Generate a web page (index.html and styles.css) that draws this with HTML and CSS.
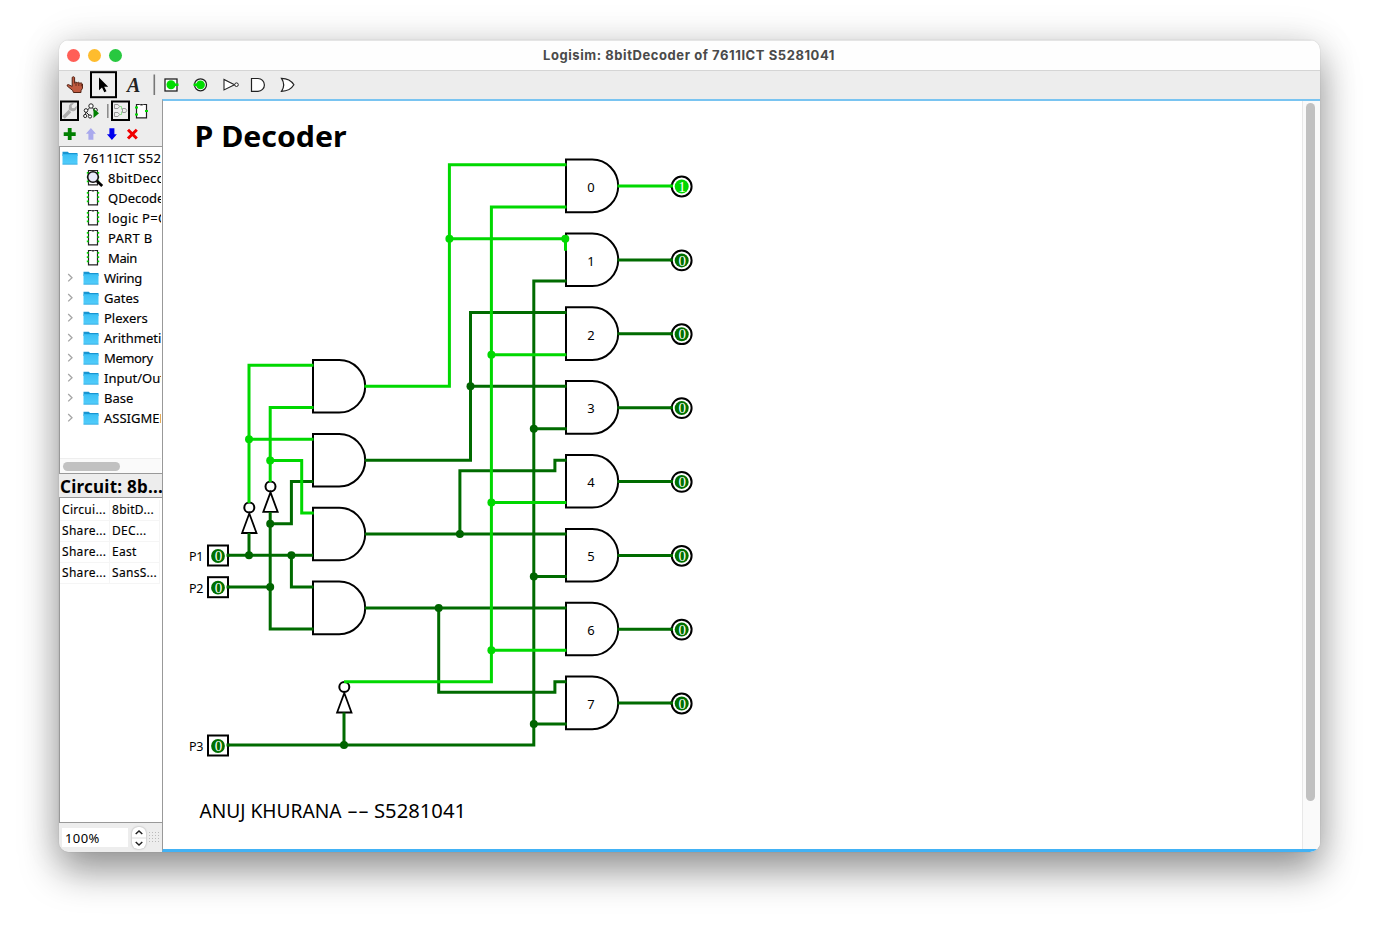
FILE: index.html
```html
<!DOCTYPE html>
<html lang="en">
<head>
<meta charset="utf-8">
<title>Logisim: 8bitDecoder of 7611ICT S5281041</title>
<link rel="stylesheet" href="styles.css">
</head>
<body>
<svg class="defs" width="0" height="0">
  <defs>
    <linearGradient id="blue" x1="0" y1="0" x2="0" y2="1"><stop offset="0" stop-color="#3bc0f5"/><stop offset="1" stop-color="#52cdfb"/></linearGradient>
    <symbol id="folder" viewBox="0 0 16 14"><path d="M.5 .7h5.300l1.200 1.300h8.500V5H.5z" fill="#1795d2"/><path d="M.5 3.200h15V13.300H.5z" fill="url(#blue)"/><path d="M.5 13.200h15" stroke="#2da5dc" stroke-width=".8"/></symbol>
    <symbol id="chip" viewBox="0 0 16 18"><path d="M3.500 1.500h9v14.400h-9z" fill="#fff" stroke="#222" stroke-width="1.200"/><path d="M6.200 1.500q1.800 2 3.600 0" fill="none" stroke="#777"/><path d="M2.700 3v12.500M13.300 3v12.500" stroke="#00dc00" stroke-width="1.800" stroke-dasharray="1.700 2.600"/></symbol>
    <symbol id="lens" viewBox="0 0 20 20"><path d="M4.500 2.500h9v14.400h-9z" fill="#fff" stroke="#222" stroke-width="1.200"/><path d="M3.700 4v12.500M14.300 4v12.500" stroke="#00dc00" stroke-width="1.800" stroke-dasharray="1.700 2.600"/><circle cx="9" cy="9" r="5.300" fill="#e9e9fa" stroke="#111" stroke-width="1.600"/><path d="m12.900 13 5.300 5" stroke="#000" stroke-width="2.800"/></symbol>
    <symbol id="chev" viewBox="0 0 8 10"><path d="m2.200 1 3.800 3.700-3.800 3.700" fill="none" stroke="#a5a5a5" stroke-width="1.300"/></symbol>
    <g id="gate"><path d="M0-26.300H26.200A26 26.300 0 0 1 26.200 26.300H0z" fill="#fff" stroke="#000" stroke-width="2"/></g>
    <g id="not"><circle cx="0" cy="0" r="5" fill="#fff" stroke="#000" stroke-width="2"/><path d="M0 6-7.200 25.500H7.200z" fill="#fff" stroke="#000" stroke-width="1.800"/></g>
  </defs>
</svg>
<div class="window">
  <header class="titlebar">
    <div class="lights"><i class="close"></i><i class="min"></i><i class="max"></i></div>
    <h1>Logisim: 8bitDecoder of 7611ICT S5281041</h1>
  </header>
  <div class="toolbar">
    <svg width="260" height="28" viewBox="59 71 260 28">
      <path d="M72.200 77.300q1.300-1.200 2.400.1V83.200l1.200-1.200 1.500.8 1.300-.5 1.200.9 1.500-.3 1.200 1.100v4.200l-1.500 2.500v1.800h-7.500l-.8-2-5.500-4.500q-.4-1.500 1.200-1.400l3.800 1.800z" fill="#c05a40" stroke="#522315" stroke-width="1"/><path d="M76 83v3m2.800-3v3m2.500-2.500v2.800" stroke="#522315" stroke-width=".8"/>
      <rect x="91" y="72.200" width="25" height="25" fill="#f0f0f0" stroke="#000" stroke-width="2"/>
      <path d="M99 77.500v12.800l3-2.800 2.300 4.800 2.200-1-2.300-4.600h4z" fill="#000"/>
      <text x="127" y="92.300" class="tool-a">A</text>
      <path d="M154.300 74.500v20.500" stroke="#777" stroke-width="1.600"/>
      <rect x="165" y="79" width="12" height="12" fill="#fff" stroke="#222" stroke-width="1.300"/><circle cx="171" cy="84.700" r="4.500" fill="#00dc00"/><path d="M174 84.700h4.500" stroke="#00dc00" stroke-width="2.500"/>
      <circle cx="200.500" cy="84.800" r="6" fill="#fff" stroke="#222" stroke-width="1.300"/><circle cx="200.500" cy="84.800" r="4.400" fill="#00dc00"/><path d="M193.500 84.700h4" stroke="#00dc00" stroke-width="2.500"/>
      <path d="M224 79.500v10.400l10.500-5.200z" fill="#fff" stroke="#222" stroke-width="1.100"/><circle cx="236.500" cy="84.700" r="1.800" fill="#fff" stroke="#222"/>
      <path d="M251.500 78.500h6.500a6.400 6.400 0 0 1 0 12.800h-6.500z" fill="#fff" stroke="#222" stroke-width="1.200"/>
      <path d="M281.500 78.300q8.500 0 12.400 6.500-3.900 6.500-12.400 6.500 4.400-6.500 0-13z" fill="#fff" stroke="#222" stroke-width="1.200"/>
    </svg>
  </div>
  <div class="workspace">
    <aside class="sidebar">
      <div class="side-tools">
        <svg width="103" height="47" viewBox="59 99 103 47">
          <rect x="61" y="101.500" width="17" height="18.500" fill="#e9e9e9" stroke="#000" stroke-width="2"/>
          <path d="m63.500 117.500 6.500-6.500" stroke="#aaa" stroke-width="3.500"/><path d="M69 105.500q1.500-3 5-2.300l-2.500 2.500.5 2.300 2.300.3 2.300-2.600q.8 4-2.300 5.300-3 .9-5.500-1.500z" fill="#aaa"/>
          <g fill="#fff" stroke="#222" stroke-width="1"><path d="m91 106-5 6m5-6 4 5m-9 1-1 4m1-4 4 4" fill="none"/><circle cx="91" cy="106" r="2.200"/><circle cx="86" cy="110.500" r="1.800"/><circle cx="95.500" cy="110" r="1.800"/><circle cx="85.200" cy="116" r="1.600"/><circle cx="90" cy="116.500" r="1.600"/></g>
          <path d="M93.500 108.500v9.500l5.500-4.800z" fill="#008000"/>
          <path d="M107.800 104v14" stroke="#888" stroke-width="1.500"/>
          <rect x="112" y="101.500" width="17" height="18.500" fill="#efefef" stroke="#000" stroke-width="2"/>
          <g fill="none" stroke="#999" stroke-width="1"><path d="M114.500 104.500h3.500q3 2 0 4h-3.500zM114.500 112.500h3.500q3 2 0 4h-3.500zM122.500 108.500h3q2.500 2 0 4h-3z"/><path d="M119.500 106.500h2v3m-2 5h2v-3" stroke="#8ddf8d"/></g>
          <path d="M136.500 104.500h10v13.300h-10z" fill="#fff" stroke="#222" stroke-width="1.200"/><path d="M139.500 104.500q2 2 4 0" fill="none" stroke="#777"/><path d="M135 107.500h3m-3 7h3m7-3.500h3" stroke="#00dc00" stroke-width="2"/>
          <path d="M69.700 128v12M63.700 134.200h12" stroke="#007f00" stroke-width="3.800"/>
          <path d="m90.900 128 5 5.800h-2.500v6h-5v-6h-2.500z" fill="#a9a9ed"/>
          <path d="m111.900 140 5-5.800h-2.500v-6h-5v6h-2.500z" fill="#0000ed"/>
          <path d="m128 129.700 8.800 8.800m0-8.800-8.800 8.800" stroke="#f00000" stroke-width="3"/>
        </svg>
      </div>
      <div class="tree">
        <div class="node root"><svg class="folder"><use href="#folder"/></svg><span>7611ICT S52</span></div>
        <div class="node leaf"><svg class="lens"><use href="#lens"/></svg><span class="wide">8bitDeco</span></div>
        <div class="node leaf"><svg class="chip"><use href="#chip"/></svg><span>QDecode</span></div>
        <div class="node leaf"><svg class="chip"><use href="#chip"/></svg><span class="wide">logic P=Q</span></div>
        <div class="node leaf"><svg class="chip"><use href="#chip"/></svg><span class="wide">PART B</span></div>
        <div class="node leaf"><svg class="chip"><use href="#chip"/></svg><span class="tight">Main</span></div>
        <div class="node lib"><svg class="chev"><use href="#chev"/></svg><svg class="folder"><use href="#folder"/></svg><span class="tight">Wiring</span></div>
        <div class="node lib"><svg class="chev"><use href="#chev"/></svg><svg class="folder"><use href="#folder"/></svg><span>Gates</span></div>
        <div class="node lib"><svg class="chev"><use href="#chev"/></svg><svg class="folder"><use href="#folder"/></svg><span>Plexers</span></div>
        <div class="node lib"><svg class="chev"><use href="#chev"/></svg><svg class="folder"><use href="#folder"/></svg><span>Arithmetic</span></div>
        <div class="node lib"><svg class="chev"><use href="#chev"/></svg><svg class="folder"><use href="#folder"/></svg><span class="tight">Memory</span></div>
        <div class="node lib"><svg class="chev"><use href="#chev"/></svg><svg class="folder"><use href="#folder"/></svg><span>Input/Out</span></div>
        <div class="node lib"><svg class="chev"><use href="#chev"/></svg><svg class="folder"><use href="#folder"/></svg><span>Base</span></div>
        <div class="node lib"><svg class="chev"><use href="#chev"/></svg><svg class="folder"><use href="#folder"/></svg><span>ASSIGMEN</span></div>
        <div class="hscroll"><i></i></div>
      </div>
      <h2>Circuit: 8b...</h2>
      <div class="attrs">
        <div class="attr"><span>Circui...</span><span>8bitD...</span></div>
        <div class="attr"><span>Share...</span><span>DEC...</span></div>
        <div class="attr"><span>Share...</span><span>East</span></div>
        <div class="attr"><span>Share...</span><span>SansS...</span></div>
      </div>
      <div class="zoom">
        <div class="zoom-value">100%</div>
        <div class="spinner"><svg width="14" height="22" viewBox="0 0 14 22"><path d="M0 11h14" stroke="#ddd"/><path d="m3.700 7 3.300-3 3.300 3M3.700 15l3.300 3 3.300-3" fill="none" stroke="#222" stroke-width="1.500"/></svg></div>
        <div class="grip"></div>
      </div>
    </aside>
    <main class="canvas">
      <svg class="circuit" viewBox="163 101 1139 748" width="1139" height="748">
        <text class="title" x="194.500" y="147.300" textLength="152" lengthAdjust="spacingAndGlyphs">P Decoder</text>
        <g class="author"><text x="199.500" y="817.700" textLength="142" lengthAdjust="spacingAndGlyphs">ANUJ KHURANA</text><text x="347" y="817.700" textLength="22" lengthAdjust="spacingAndGlyphs">--</text><text x="374" y="817.700" textLength="92" lengthAdjust="spacingAndGlyphs">S5281041</text></g>
        <g>
          <use href="#gate" x="313" y="386.300"/><use href="#gate" x="313" y="460.200"/><use href="#gate" x="313" y="534"/><use href="#gate" x="313" y="607.900"/>
          <use href="#gate" x="566" y="185.900"/><use href="#gate" x="566" y="259.800"/><use href="#gate" x="566" y="333.600"/><use href="#gate" x="566" y="407.400"/>
          <use href="#gate" x="566" y="481.300"/><use href="#gate" x="566" y="555.200"/><use href="#gate" x="566" y="629"/><use href="#gate" x="566" y="702.900"/>
        </g>
        <use href="#not" x="249.300" y="507.500"/><use href="#not" x="270.500" y="486.400"/><use href="#not" x="344.300" y="687"/>
        <g class="wire low">
          <path d="M228 555.300H313M249 533v22M291.400 555.300v31.700H313.500M228 587h42M270.200 512v117H313.500M270.200 523.700h21.200V481.500H313.500"/>
          <path d="M228 745.100H533.800V281H566.500M344 712.500v32.600M533.800 428.700h33M533.800 576.400h33M533.800 724h33"/>
          <path d="M365 460.200H470.500V312.500H566.500M470.500 386.300h96M365 534h201.500M459.900 534V470.700H554.900V460.200h11.600M365 607.900h201.500M438.700 607.900V692.300H554.900V681.800h11.600"/>
          <path d="M617.500 260h54.500M617.500 333.800h54.500M617.500 407.700h54.500M617.500 481.500h54.500M617.500 555.400h54.500M617.500 629.200h54.500M617.500 703.100h54.500"/>
        </g>
        <g class="wire high">
          <path d="M249 503V365.300H313.500M249 439.200h64.500M270.200 482V407.500H313.500M270.200 460.500h31.500V512.900h12"/>
          <path d="M364.500 386.300h84.900V164.800H566.500M449.400 238.700H565.500v12M344 681.700H491.400V207H566.500M491.400 354.800h75M491.400 502.500h75M491.400 650.200h75M617.500 186h54.500"/>
        </g>
        <g fill="#006400">
          <circle cx="249" cy="555.300" r="4"/><circle cx="291.400" cy="555.300" r="4"/><circle cx="270.200" cy="587" r="4"/><circle cx="270.200" cy="523.700" r="4"/><circle cx="344" cy="745.100" r="4"/><circle cx="533.800" cy="428.700" r="4"/><circle cx="533.800" cy="576.400" r="4"/><circle cx="533.800" cy="724" r="4"/><circle cx="470.500" cy="386.300" r="4"/><circle cx="459.900" cy="534" r="4"/><circle cx="438.700" cy="607.900" r="4"/>
        </g>
        <g fill="#00d800">
          <circle cx="249" cy="439.200" r="4"/><circle cx="270.200" cy="460.500" r="4"/><circle cx="449.400" cy="238.700" r="4"/><circle cx="565.300" cy="238.700" r="4"/><circle cx="491.400" cy="354.800" r="4"/><circle cx="491.400" cy="502.500" r="4"/><circle cx="491.400" cy="650.200" r="4"/>
        </g>
        <g class="num">
          <text x="591" y="191.800">0</text><text x="591" y="265.700">1</text><text x="591" y="339.500">2</text><text x="591" y="413.400">3</text><text x="591" y="487.200">4</text><text x="591" y="561.100">5</text><text x="591" y="634.900">6</text><text x="591" y="708.800">7</text>
        </g>
        <g class="label"><text x="189" y="561" textLength="14.500">P1</text><text x="189" y="592.700" textLength="14.500">P2</text><text x="189" y="750.800" textLength="14.500">P3</text></g>
        <g class="pin"><rect x="208" y="545.500" width="20" height="20"/><rect x="208" y="577.200" width="20" height="20"/><rect x="208" y="735.500" width="20" height="20"/>
          <circle cx="681.700" cy="186.500" r="9.900"/><circle cx="681.700" cy="260.400" r="9.900"/><circle cx="681.700" cy="334.200" r="9.900"/><circle cx="681.700" cy="408.100" r="9.900"/><circle cx="681.700" cy="481.900" r="9.900"/><circle cx="681.700" cy="555.800" r="9.900"/><circle cx="681.700" cy="629.600" r="9.900"/><circle cx="681.700" cy="703.500" r="9.900"/></g>
        <g class="wire"><path class="low" d="M226.500 555.300h3M226.500 587h3M226.500 745.100h3M670 260h3M670 333.800h3M670 407.700h3M670 481.500h3M670 555.400h3M670 629.200h3M670 703.100h3"/><path class="high" d="M670 186h3"/></g>
        <g fill="#007000"><circle cx="218" cy="556" r="6.900"/><circle cx="218" cy="587.700" r="6.900"/><circle cx="218" cy="746" r="6.900"/><circle cx="681.700" cy="260.400" r="7"/><circle cx="681.700" cy="334.200" r="7"/><circle cx="681.700" cy="408.100" r="7"/><circle cx="681.700" cy="481.900" r="7"/><circle cx="681.700" cy="555.800" r="7"/><circle cx="681.700" cy="629.600" r="7"/><circle cx="681.700" cy="703.500" r="7"/></g>
        <circle cx="681.700" cy="186.500" r="7" fill="#00d800"/>
        <g class="bit"><text x="218.600" y="561.200">0</text><text x="218.600" y="592.900">0</text><text x="218.600" y="751.200">0</text><text x="682" y="191.700">1</text><text x="682.300" y="265.600">0</text><text x="682.300" y="339.400">0</text><text x="682.300" y="413.300">0</text><text x="682.300" y="487.100">0</text><text x="682.300" y="561">0</text><text x="682.300" y="634.800">0</text><text x="682.300" y="708.700">0</text></g>
      </svg>
      <div class="vscroll"><i></i></div>
    </main>
  </div>
</div>
</body>
</html>
```
FILE: styles.css
```css
* { box-sizing: border-box; }
body { margin: 0; width: 1384px; height: 935px; overflow: hidden; background: #fff; padding: 40px 0 0 59px; font-family: "Noto Sans", sans-serif; color: #000; }
.defs { display: block; height: 0; }
.window { width: 1261px; height: 812px; border-radius: 10px; display: flex; flex-direction: column; overflow: hidden; background: #eee; box-shadow: 0 0 1px rgba(0,0,0,.3), 0 19px 38px rgba(0,0,0,.4), 0 0 40px rgba(0,0,0,.1); }
.titlebar { height: 31px; flex: none; display: grid; grid-template-columns: 200px 1fr 200px; align-items: center; background: #fefefe; border-top: 1px solid #e5e5e5; border-bottom: 1px solid #d5d5d5; padding-bottom: 1px; }
.lights { display: flex; gap: 8px; padding-left: 8px; }
.lights i { width: 13px; height: 13px; border-radius: 50%; }
.close { background: #ff5f57; }
.min { background: #febc2e; }
.max { background: #28c840; }
h1 { margin: 0; text-align: center; font: bold 13px Inter, sans-serif; letter-spacing: .57px; white-space: nowrap; color: #4a4a4a; padding-right: 1px; }
.toolbar { height: 28px; flex: none; background: #ededed; }
.toolbar svg, .side-tools svg { display: block; }
.tool-a { font: italic bold 20px "Liberation Serif", serif; fill: #222; }
.workspace { flex: 1; display: flex; min-height: 0; }
.sidebar { width: 103px; flex: none; display: flex; flex-direction: column; background: #ededed; }
.side-tools { height: 47px; flex: none; }
.tree { height: 328px; flex: none; background: #fff; border: 1px solid #999; border-right: 0; padding: 1px 1px 0 0; overflow: hidden; display: flex; flex-direction: column; }
.node { height: 20px; flex: none; display: flex; align-items: center; overflow: hidden; white-space: nowrap; font-size: 13px; line-height: 20px; letter-spacing: 0; -webkit-text-stroke: .15px #000; }
.wide { letter-spacing: .3px; }
.tight { letter-spacing: -.4px; }
.root { padding-left: 2px; gap: 5px; letter-spacing: .3px; }
.leaf { padding-left: 25px; gap: 7px; }
.lib { padding-left: 6px; gap: 5px; }
.node svg { flex: none; }
.folder { width: 16px; height: 14px; }
.chip { width: 16px; height: 18px; }
.lens { width: 20px; height: 20px; margin: 0 -3px 0 -1px; }
.chev { width: 8px; height: 10px; margin-right: 4px; }
.hscroll { height: 15px; margin-top: auto; padding: 3px 3px; background: #fafafa; border-top: 1px solid #eee; }
.hscroll i { display: block; width: 57px; height: 9px; border-radius: 5px; background: #c1c1c1; }
h2 { margin: 0; height: 23px; flex: none; padding-left: 1px; font-size: 17px; line-height: 26px; font-weight: bold; letter-spacing: .25px; white-space: nowrap; overflow: hidden; }
.attrs { flex: 1; background: #fff; border: 1px solid #999; border-right: 0; padding-top: 2px; }
.attr { height: 21px; display: grid; grid-template-columns: 50px 50px; font-size: 12px; line-height: 20px; letter-spacing: .3px; -webkit-text-stroke: .15px #000; }
.attr span { border-bottom: 1px solid #f5f5f5; border-right: 1px solid #f5f5f5; padding-left: 2px; white-space: nowrap; }
.zoom { height: 29px; flex: none; display: flex; align-items: center; padding-left: 3px; }
.zoom-value { width: 66px; height: 19px; background: #fff; padding-left: 3px; font-size: 13px; line-height: 20px; letter-spacing: .4px; }
.spinner { width: 14px; height: 22px; margin-left: 4px; background: #fff; border-radius: 6px; box-shadow: 0 0 2px rgba(0,0,0,.35); }
.spinner svg { display: block; }
.grip { width: 12px; height: 13px; margin-left: 2px; background: radial-gradient(circle, #bbb .8px, transparent 1px) 0 0 / 3px 3px; }
.canvas { flex: 1; min-width: 0; background: #fff; border-left: 1px solid #999; border-top: 2px solid #79c4f1; border-bottom: 3px solid #42b2f5; display: flex; }
.circuit { flex: none; display: block; }
.circuit text { font-family: "Noto Sans", sans-serif; }
.circuit .title { font-size: 28px; font-weight: bold; }
.author text { font-size: 20px; }
.wire { fill: none; stroke-width: 3; }
.low { stroke: #006b00; }
.high { stroke: #00d800; }
.num { font-size: 13px; text-anchor: middle; }
.label { font-size: 12.500px; }
.pin { fill: #fff; stroke: #000; stroke-width: 2; }
.circuit .bit text { font-family: "Liberation Serif", serif; font-size: 15px; text-anchor: middle; fill: #fff; }
.vscroll { flex: 1; background: #fafafa; border-left: 1px solid #e8e8e8; padding: 2px 0 0 3px; }
.vscroll i { display: block; width: 9px; height: 698px; border-radius: 5px; background: #c1c1c1; }
```
